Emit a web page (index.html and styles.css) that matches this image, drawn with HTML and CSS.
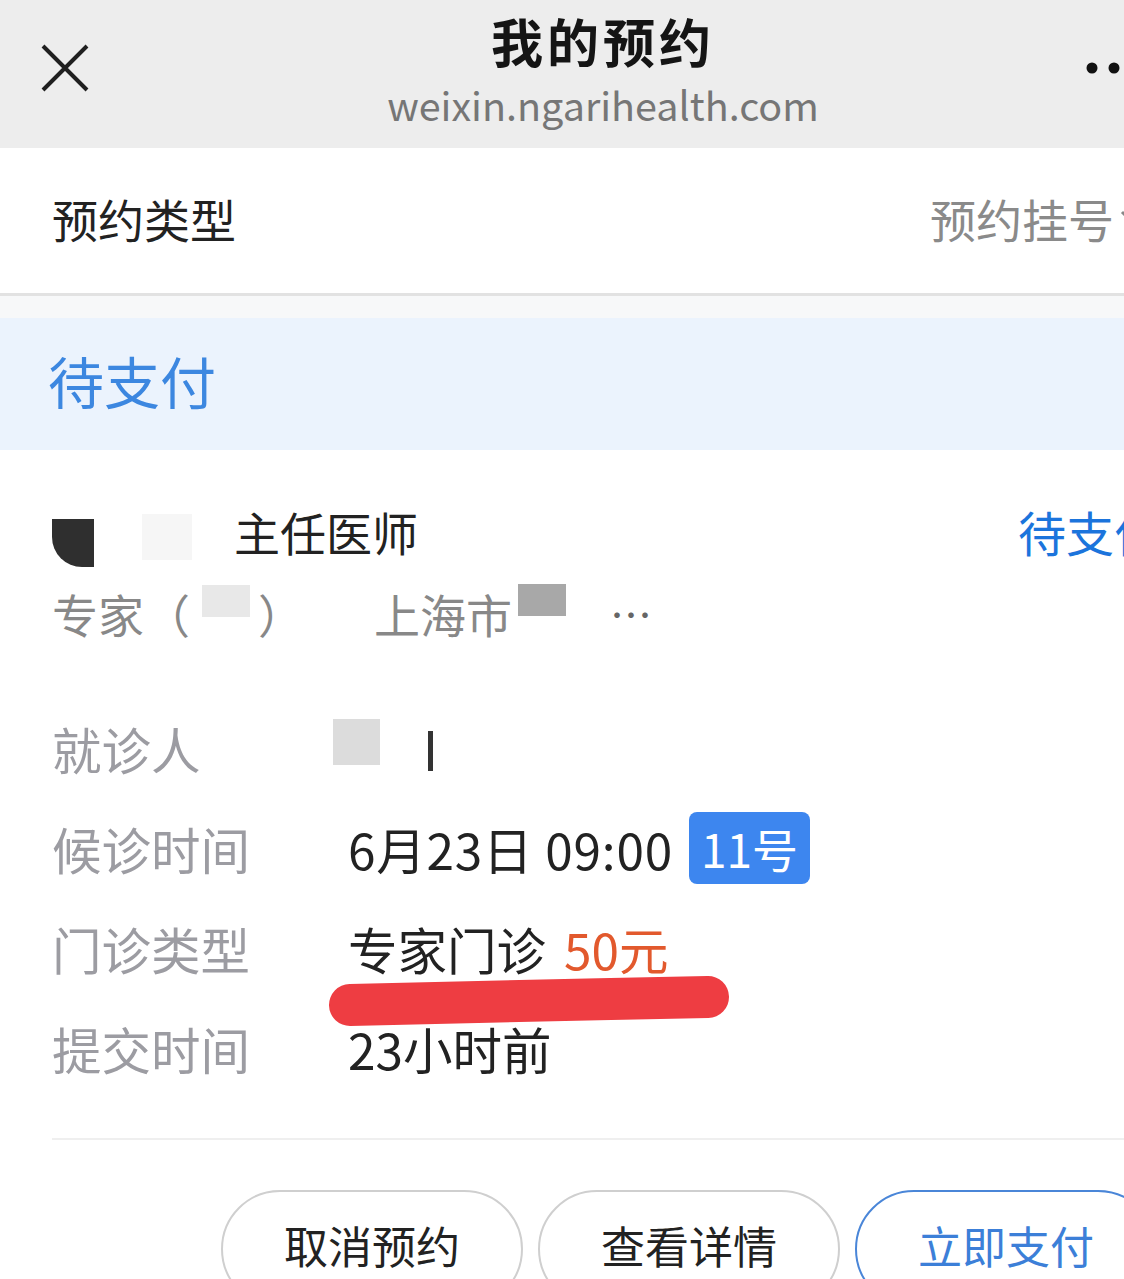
FILE: index.html
```html
<!DOCTYPE html>
<html lang="zh-CN">
<head>
<meta charset="utf-8">
<title>我的预约</title>
<link rel="stylesheet" href="styles.css">
</head>
<body>
<div class="page">
  <header class="topbar">
    <div class="tb-left">
      <svg class="close" width="50" height="50" viewBox="0 0 50 50"><path d="M3 3 L47 47 M47 3 L3 47" stroke="#1f1f1f" stroke-width="4" fill="none"/></svg>
    </div>
    <div class="tb-center">
      <div class="title">我的预约</div>
      <div class="url">weixin.ngarihealth.com</div>
    </div>
    <div class="tb-right">
      <svg class="dots" width="60" height="14" viewBox="0 0 60 14"><circle cx="7" cy="7" r="5.5" fill="#111"/><circle cx="29" cy="7" r="5.5" fill="#111"/><circle cx="51" cy="7" r="5.5" fill="#111"/></svg>
    </div>
  </header>

  <section class="type-row">
    <span class="type-label">预约类型</span>
    <span class="type-value">预约挂号<svg class="chev" width="30" height="20" viewBox="0 0 30 20"><path d="M4 4 L15 15 L26 4" stroke="#888" stroke-width="3" fill="none"/></svg></span>
  </section>

  <div class="gap"></div>

  <section class="status-bar">待支付</section>

  <section class="card">
    <div class="doc-row">
      <div class="doc-name">
        <span class="redact-dark"></span>
        <span class="redact-light"></span>
        <span class="doc-title">主任医师</span>
      </div>
      <span class="doc-status">待支付</span>
    </div>
    <div class="sub-row">
      <span>专家（</span><span class="redact-box"></span><span>）</span>
      <span class="city">上海市</span><span class="redact-gray"></span>
      <span class="ellipsis">…</span>
    </div>

    <div class="info">
      <div class="info-row">
        <span class="label">就诊人</span>
        <span class="value"><span class="redact-patient"></span><span class="redact-mark"></span></span>
      </div>
      <div class="info-row">
        <span class="label">候诊时间</span>
        <span class="value"><span class="digits">6月23日 09:00</span><span class="badge">11号</span></span>
      </div>
      <div class="info-row">
        <span class="label">门诊类型</span>
        <span class="value marked">专家门诊 <span class="price">50元</span>
          <svg class="marker" width="410" height="60" viewBox="0 0 410 60"><path d="M24 34 C 120 32, 260 28, 382 26" stroke="#ee3d42" stroke-width="42" stroke-linecap="round" fill="none"/></svg>
        </span>
      </div>
      <div class="info-row">
        <span class="label">提交时间</span>
        <span class="value">23小时前</span>
      </div>
    </div>

    <div class="divider"></div>

    <div class="actions">
      <button class="btn">取消预约</button>
      <button class="btn">查看详情</button>
      <button class="btn primary">立即支付</button>
    </div>
  </section>
</div>
</body>
</html>
```

FILE: styles.css
```css
html, body {
  margin: 0;
  padding: 0;
  overflow: hidden;
  background: #ffffff;
}
body {
  width: 1124px;
  height: 1279px;
  font-family: "Noto Sans CJK SC", "Noto Sans", sans-serif;
}
.page {
  width: 1206px;
}
.topbar {
  height: 148px;
  background: #ededed;
  display: grid;
  grid-template-columns: 1fr auto 1fr;
  align-items: start;
}
.tb-left {
  padding: 43px 0 0 40px;
}
.close { display: block; }
.tb-center {
  padding-top: 8px;
  display: flex;
  flex-direction: column;
  align-items: center;
}
.title {
  font-size: 52px;
  line-height: 66px;
  font-weight: 700;
  color: #151515;
  letter-spacing: 4px;
}
.url {
  font-size: 39.5px;
  line-height: 60px;
  color: #767676;
}
.tb-right {
  display: flex;
  justify-content: flex-end;
  padding: 61px 0 0 0;
}
.dots { display: block; margin-right: 61px; }

.type-row {
  height: 148px;
  display: flex;
  align-items: center;
  justify-content: space-between;
  padding: 0 58px 6px 52px;
  box-sizing: border-box;
  border-bottom: 3px solid #e2e2e2;
}
.type-label {
  font-size: 46px;
  color: #222;
  line-height: 60px;
}
.type-value {
  font-size: 46px;
  color: #8a8a8a;
  line-height: 60px;
  display: flex;
  align-items: center;
}
.chev { margin-left: 4px; }
.gap {
  height: 22px;
  background: #f7f8f9;
}
.status-bar {
  height: 132px;
  background: #ebf3fd;
  display: flex;
  align-items: center;
  padding-left: 48px;
  padding-bottom: 10px;
  box-sizing: border-box;
  font-size: 56px;
  color: #3c87e0;
}

.card {
  padding: 49px 44px 0 52px;
}
.doc-row {
  display: flex;
  justify-content: space-between;
  align-items: center;
  height: 64px;
}
.doc-name {
  display: flex;
  align-items: center;
}
.redact-dark {
  width: 42px;
  height: 48px;
  background: #2f2f2f;
  border-radius: 0 0 0 30px;
  margin-top: 24px;
}
.redact-light {
  width: 50px;
  height: 46px;
  background: #f6f6f6;
  margin-left: 48px;
  margin-top: 12px;
}
.doc-title {
  font-size: 46px;
  color: #222;
  margin-left: 42px;
  line-height: 64px;
}
.doc-status {
  font-size: 48px;
  color: #1b74dc;
  line-height: 64px;
}
.sub-row {
  margin-top: 18px;
  height: 64px;
  display: flex;
  align-items: center;
  font-size: 46px;
  color: #888;
  line-height: 64px;
}
.redact-box {
  width: 48px;
  height: 32px;
  background: #e8e8e8;
  margin: -24px 8px 0 12px;
}
.city { margin-left: 70px; }
.redact-gray {
  width: 48px;
  height: 32px;
  background: #a8a8a8;
  margin: -26px 0 0 6px;
}
.ellipsis {
  margin-left: 44px;
  color: #666;
  font-size: 42px;
  letter-spacing: 2px;
}

.info {
  margin-top: 53px;
}
.info-row {
  display: flex;
  align-items: center;
  height: 100px;
}
.label {
  width: 296px;
  font-size: 49.5px;
  color: #9c9ca2;
}
.value {
  font-size: 49.5px;
  color: #222;
  display: flex;
  align-items: center;
  position: relative;
}
.digits { letter-spacing: 0.8px; }
.redact-patient {
  width: 47px;
  height: 46px;
  background: #dcdcdc;
  margin: -12px 0 0 -15px;
}
.redact-mark {
  width: 5px;
  height: 40px;
  background: #333;
  margin-left: 48px;
  margin-top: 6px;
}
.badge {
  margin-left: 16px;
  background: #3d86ef;
  color: #fff;
  border-radius: 8px;
  padding: 0 12px;
  height: 72px;
  line-height: 72px;
  font-size: 46px;
}
.price {
  color: #e2592d;
  margin-left: 18px;
}
.marker {
  position: absolute;
  left: -22px;
  top: 58px;
}
.divider {
  margin-top: 40px;
  margin-right: -44px;
  height: 2px;
  background: #efefef;
}
.actions {
  margin-top: 50px;
  display: flex;
  justify-content: flex-end;
  gap: 15px;
  margin-right: 5px;
}
.btn {
  width: 302px;
  height: 118px;
  border: 2px solid #cfcfcf;
  border-radius: 60px;
  background: #fff;
  font-family: "Noto Sans CJK SC", "Noto Sans", sans-serif;
  font-size: 44px;
  color: #222;
  padding: 0 0 8px 0;
}
.btn.primary {
  border-color: #4a86d8;
  color: #3c7fd8;
}
```
